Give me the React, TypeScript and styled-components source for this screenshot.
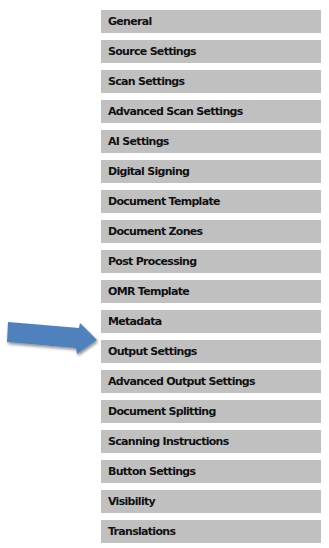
import React from 'react'
import styled, { createGlobalStyle } from 'styled-components'

const GlobalStyle = createGlobalStyle`
  html, body {
    margin: 0;
    padding: 0;
    background: #ffffff;
  }
`

const items = [
  'General',
  'Source Settings',
  'Scan Settings',
  'Advanced Scan Settings',
  'AI Settings',
  'Digital Signing',
  'Document Template',
  'Document Zones',
  'Post Processing',
  'OMR Template',
  'Metadata',
  'Output Settings',
  'Advanced Output Settings',
  'Document Splitting',
  'Scanning Instructions',
  'Button Settings',
  'Visibility',
  'Translations',
]

const Page = styled.div`
  position: relative;
  width: 329px;
  height: 548px;
  display: flex;
  padding: 10px 0 0 101px;
  box-sizing: border-box;
`

const Menu = styled.ul`
  list-style: none;
  margin: 0;
  padding: 0;
  width: 220px;
  display: flex;
  flex-direction: column;
  gap: 7px;
`

const MenuItem = styled.li`
  height: 23px;
  line-height: 24px;
  background: #c0c0c0;
  padding-left: 7px;
  font-family: "DejaVu Sans", Verdana, sans-serif;
  font-weight: bold;
  font-size: 11px;
  letter-spacing: -0.7px;
  color: #111111;
  white-space: nowrap;
`

const Pointer = styled.svg`
  position: absolute;
  left: 0;
  top: 315px;
`

function Arrow() {
  return (
    <Pointer width="100" height="50" viewBox="0 0 100 50">
      <defs>
        <filter id="shadow" x="-10%" y="-20%" width="130%" height="160%">
          <feGaussianBlur in="SourceAlpha" stdDeviation="1.5" />
          <feOffset dx="1" dy="2" result="blur" />
          <feComponentTransfer>
            <feFuncA type="linear" slope="0.45" />
          </feComponentTransfer>
          <feMerge>
            <feMergeNode />
            <feMergeNode in="SourceGraphic" />
          </feMerge>
        </filter>
      </defs>
      <polygon
        points="8,7 79,13 80,8 97,25 77,39 76,33 7,27"
        fill="#4f81bd"
        filter="url(#shadow)"
      />
    </Pointer>
  )
}

export default function App() {
  return (
    <Page>
      <GlobalStyle />
      <Arrow />
      <Menu>
        {items.map((label) => (
          <MenuItem key={label}>{label}</MenuItem>
        ))}
      </Menu>
    </Page>
  )
}
